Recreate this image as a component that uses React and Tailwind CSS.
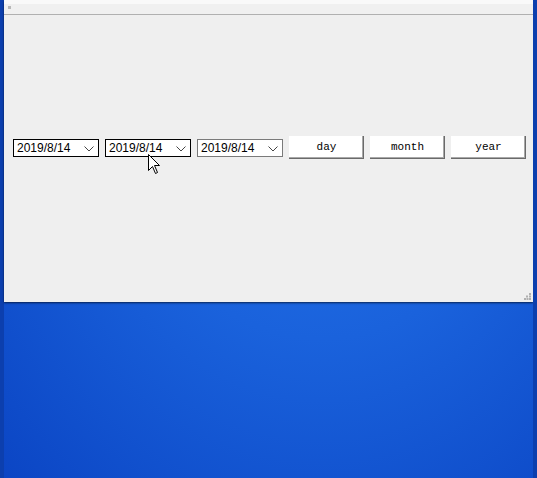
import React from "react";

function DateBox({ border = "border-black" }) {
  return (
    <div className={`relative mt-[3px] flex h-[18px] w-[86px] items-center border ${border} bg-white pl-[3px]`}>
      <span className="text-[12px] leading-none text-black" style={{ fontFamily: '"Liberation Sans", Arial, sans-serif' }}>2019/8/14</span>
      <svg className="absolute right-[4px] top-[6px]" width="10" height="6" viewBox="0 0 10 6">
        <path d="M0.5 0.5 L5 5 L9.5 0.5" fill="none" stroke="#444" strokeWidth="1" />
      </svg>
    </div>
  );
}

function Btn({ children }) {
  return (
    <div
      className="flex h-[23px] w-[75px] items-center justify-center bg-white text-[11px] text-black shadow-[inset_-1px_-1px_0_#6a6a6a,inset_-2px_-2px_0_#a8a8a8]"
      style={{ fontFamily: '"Liberation Mono", "DejaVu Sans Mono", monospace' }}
    >
      {children}
    </div>
  );
}

export default function App() {
  return (
    <div className="relative h-[478px] w-[537px] overflow-hidden bg-[radial-gradient(ellipse_at_60%_20%,#2474ea_0%,#1a62dc_45%,#0b45c4_100%)]">
      <div className="flex h-full">
        <div className="h-full w-[4px] bg-[#0c3fae]" />
        <div className="flex h-[302px] w-[529px] flex-col bg-[#efefef] shadow-[0_1px_2px_rgba(0,0,0,0.6),1px_0_1px_rgba(0,0,0,0.3)]">
          <div className="h-[4px] bg-[#f9f9f9]" />
          <div className="flex h-[10px] items-start bg-[#f0f0f0] pl-[4px] pt-[2px]">
            <div className="h-[3px] w-[3px] bg-[#b8b8b8]" />
          </div>
          <div className="h-[1px] bg-[#b0b0b0]" />
          <div className="relative flex-1">
            <div className="flex items-start gap-[6px] pl-[9px] pt-[121px]">
              <DateBox />
              <DateBox />
              <DateBox border="border-[#7a7a7a]" />
              <Btn>day</Btn>
              <Btn>month</Btn>
              <Btn>year</Btn>
            </div>
            <svg className="absolute bottom-[2px] right-[2px]" width="7" height="7" viewBox="0 0 7 7">
              <rect x="5" y="0" width="2" height="2" fill="#b0b0b0" />
              <rect x="2" y="2.5" width="2" height="2" fill="#b0b0b0" />
              <rect x="5" y="2.5" width="2" height="2" fill="#b0b0b0" />
              <rect x="0" y="5" width="2" height="2" fill="#b0b0b0" />
              <rect x="2.5" y="5" width="2" height="2" fill="#b0b0b0" />
              <rect x="5" y="5" width="2" height="2" fill="#b0b0b0" />
            </svg>
          </div>
        </div>
        <div className="h-full w-[4px] bg-[#0c3fae]" />
      </div>
      <svg className="absolute left-[148px] top-[154px]" width="13" height="21" viewBox="0 0 13 21">
        <path d="M0.5 0.5 L0.5 16.5 L4.5 12.5 L7.5 19.5 L9.5 18.5 L6.5 11.5 L11.5 11.5 Z" fill="#fff" stroke="#000" strokeWidth="1" strokeLinejoin="miter" />
      </svg>
    </div>
  );
}
